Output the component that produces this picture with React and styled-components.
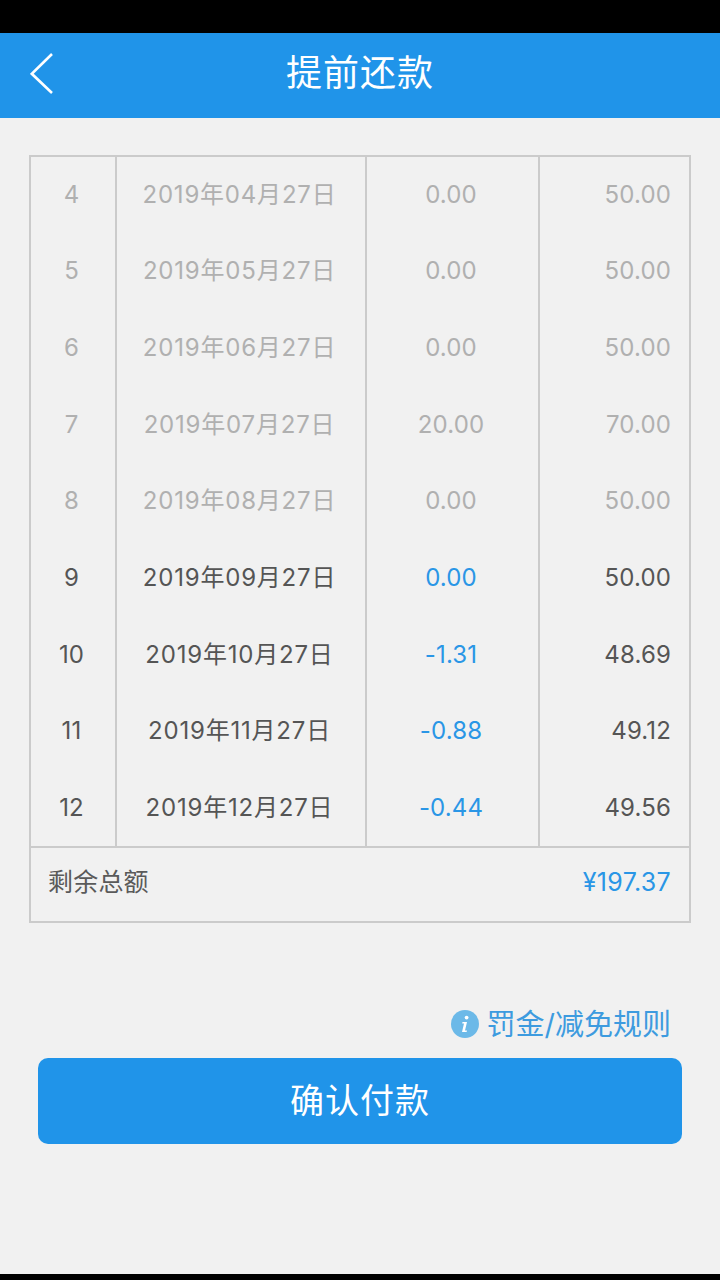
import React from 'react';
import styled, { createGlobalStyle } from 'styled-components';

const GlobalStyle = createGlobalStyle`
  html, body {
    margin: 0;
    padding: 0;
    background: #000;
  }
  * {
    box-sizing: border-box;
  }
`;

const Screen = styled.div`
  width: 720px;
  height: 1280px;
  display: flex;
  flex-direction: column;
  background: #000;
  padding: 33px 0 6px;
  font-family: Inter, "Noto Sans CJK SC", sans-serif;
  overflow: hidden;
`;

const Header = styled.header`
  height: 85px;
  flex: none;
  display: flex;
  align-items: center;
  background: #2094e9;
  position: relative;
  justify-content: center;
`;

const BackButton = styled.svg`
  position: absolute;
  left: 30px;
  top: 20px;
  width: 24px;
  height: 42px;
`;

const Title = styled.h1`
  margin: 0;
  color: #fff;
  font-size: 36px;
  font-weight: 400;
  line-height: 1;
  letter-spacing: 1px;
  padding-bottom: 6px;
`;

const Body = styled.main`
  flex: 1;
  background: #f1f1f1;
  padding: 37px 29px 0;
  display: flex;
  flex-direction: column;
`;

const Table = styled.div`
  border: 2px solid #cbcbcb;
  height: 768px;
  display: flex;
  flex-direction: column;
`;

const Rows = styled.div`
  height: 691px;
  display: grid;
  grid-template-columns: 86px 250px 173px 1fr;
  grid-auto-rows: 76.67px;
  border-bottom: 2px solid #cbcbcb;
`;

const Cell = styled.div`
  display: flex;
  align-items: center;
  justify-content: ${props => (props.$right ? 'flex-end' : 'center')};
  padding: ${props => (props.$right ? '0 18px 1px 0' : '0 3px 1px 0')};
  border-right: ${props => (props.$last ? 'none' : '2px solid #cbcbcb')};
  color: ${props => props.$color};
  font-size: 24px;
  line-height: 30px;
  letter-spacing: ${props => (props.$date ? '0.8px' : '0.15px')};
`;

const Total = styled.div`
  flex: 1;
  display: flex;
  align-items: center;
  justify-content: space-between;
  padding: 0 18px 6px 17px;
  line-height: 30px;
`;

const TotalLabel = styled.span`
  color: #5a5a5a;
  font-size: 25px;
  letter-spacing: 0.2px;
`;

const TotalValue = styled.span`
  color: #2a96e6;
  font-size: 25px;
  letter-spacing: 0.3px;
`;

const RuleLink = styled.div`
  display: flex;
  align-items: center;
  justify-content: flex-end;
  gap: 8px;
  margin-top: 82px;
  padding: 0 20px 2px 0;
  height: 40px;
  color: #3d9bdf;
  font-size: 29px;
  line-height: 36px;
`;

const RuleText = styled.span`
  padding-top: 2px;
`;

const InfoIcon = styled.svg`
  width: 28px;
  height: 28px;
`;

const ConfirmButton = styled.button`
  display: block;
  width: 644px;
  height: 86px;
  margin: 13px 0 0 9px;
  padding: 0;
  border: none;
  border-radius: 10px;
  background: #2094e9;
  color: #fff;
  font-family: inherit;
  font-size: 34px;
  line-height: 40px;
  letter-spacing: 1px;
`;

const GREY = '#b0b0b0';
const DARK = '#555555';
const BLUE = '#2a96e6';

const rows = [
  ['4', '2019年04月27日', '0.00', '50.00'],
  ['5', '2019年05月27日', '0.00', '50.00'],
  ['6', '2019年06月27日', '0.00', '50.00'],
  ['7', '2019年07月27日', '20.00', '70.00'],
  ['8', '2019年08月27日', '0.00', '50.00'],
  ['9', '2019年09月27日', '0.00', '50.00', true],
  ['10', '2019年10月27日', '-1.31', '48.69', true],
  ['11', '2019年11月27日', '-0.88', '49.12', true],
  ['12', '2019年12月27日', '-0.44', '49.56', true],
];

export default function App() {
  return (
    <Screen>
      <GlobalStyle />
      <Header>
        <BackButton viewBox="0 0 24 42">
          <path d="M22 1 L1.8 20.8 L22 40" fill="none" stroke="#fff" strokeWidth="2.6" />
        </BackButton>
        <Title>提前还款</Title>
      </Header>
      <Body>
        <Table>
          <Rows>
            {rows.map(([no, date, fee, amount, active]) => (
              <React.Fragment key={no}>
                <Cell $color={active ? DARK : GREY}>{no}</Cell>
                <Cell $color={active ? DARK : GREY} $date>{date}</Cell>
                <Cell $color={active ? BLUE : GREY}>{fee}</Cell>
                <Cell $color={active ? DARK : GREY} $right $last>{amount}</Cell>
              </React.Fragment>
            ))}
          </Rows>
          <Total>
            <TotalLabel>剩余总额</TotalLabel>
            <TotalValue>¥197.37</TotalValue>
          </Total>
        </Table>
        <RuleLink>
          <InfoIcon viewBox="0 0 28 28">
            <circle cx="14" cy="14" r="14" fill="#6cb9e8" />
            <circle cx="15.6" cy="7.6" r="1.9" fill="#fff" />
            <path d="M11.5 12 H16 L14 20.5 H16 L15.6 22 H11 L13 13.4 H11.2 Z" fill="#fff" />
          </InfoIcon>
          <RuleText>罚金/减免规则</RuleText>
        </RuleLink>
        <ConfirmButton>确认付款</ConfirmButton>
      </Body>
    </Screen>
  );
}
